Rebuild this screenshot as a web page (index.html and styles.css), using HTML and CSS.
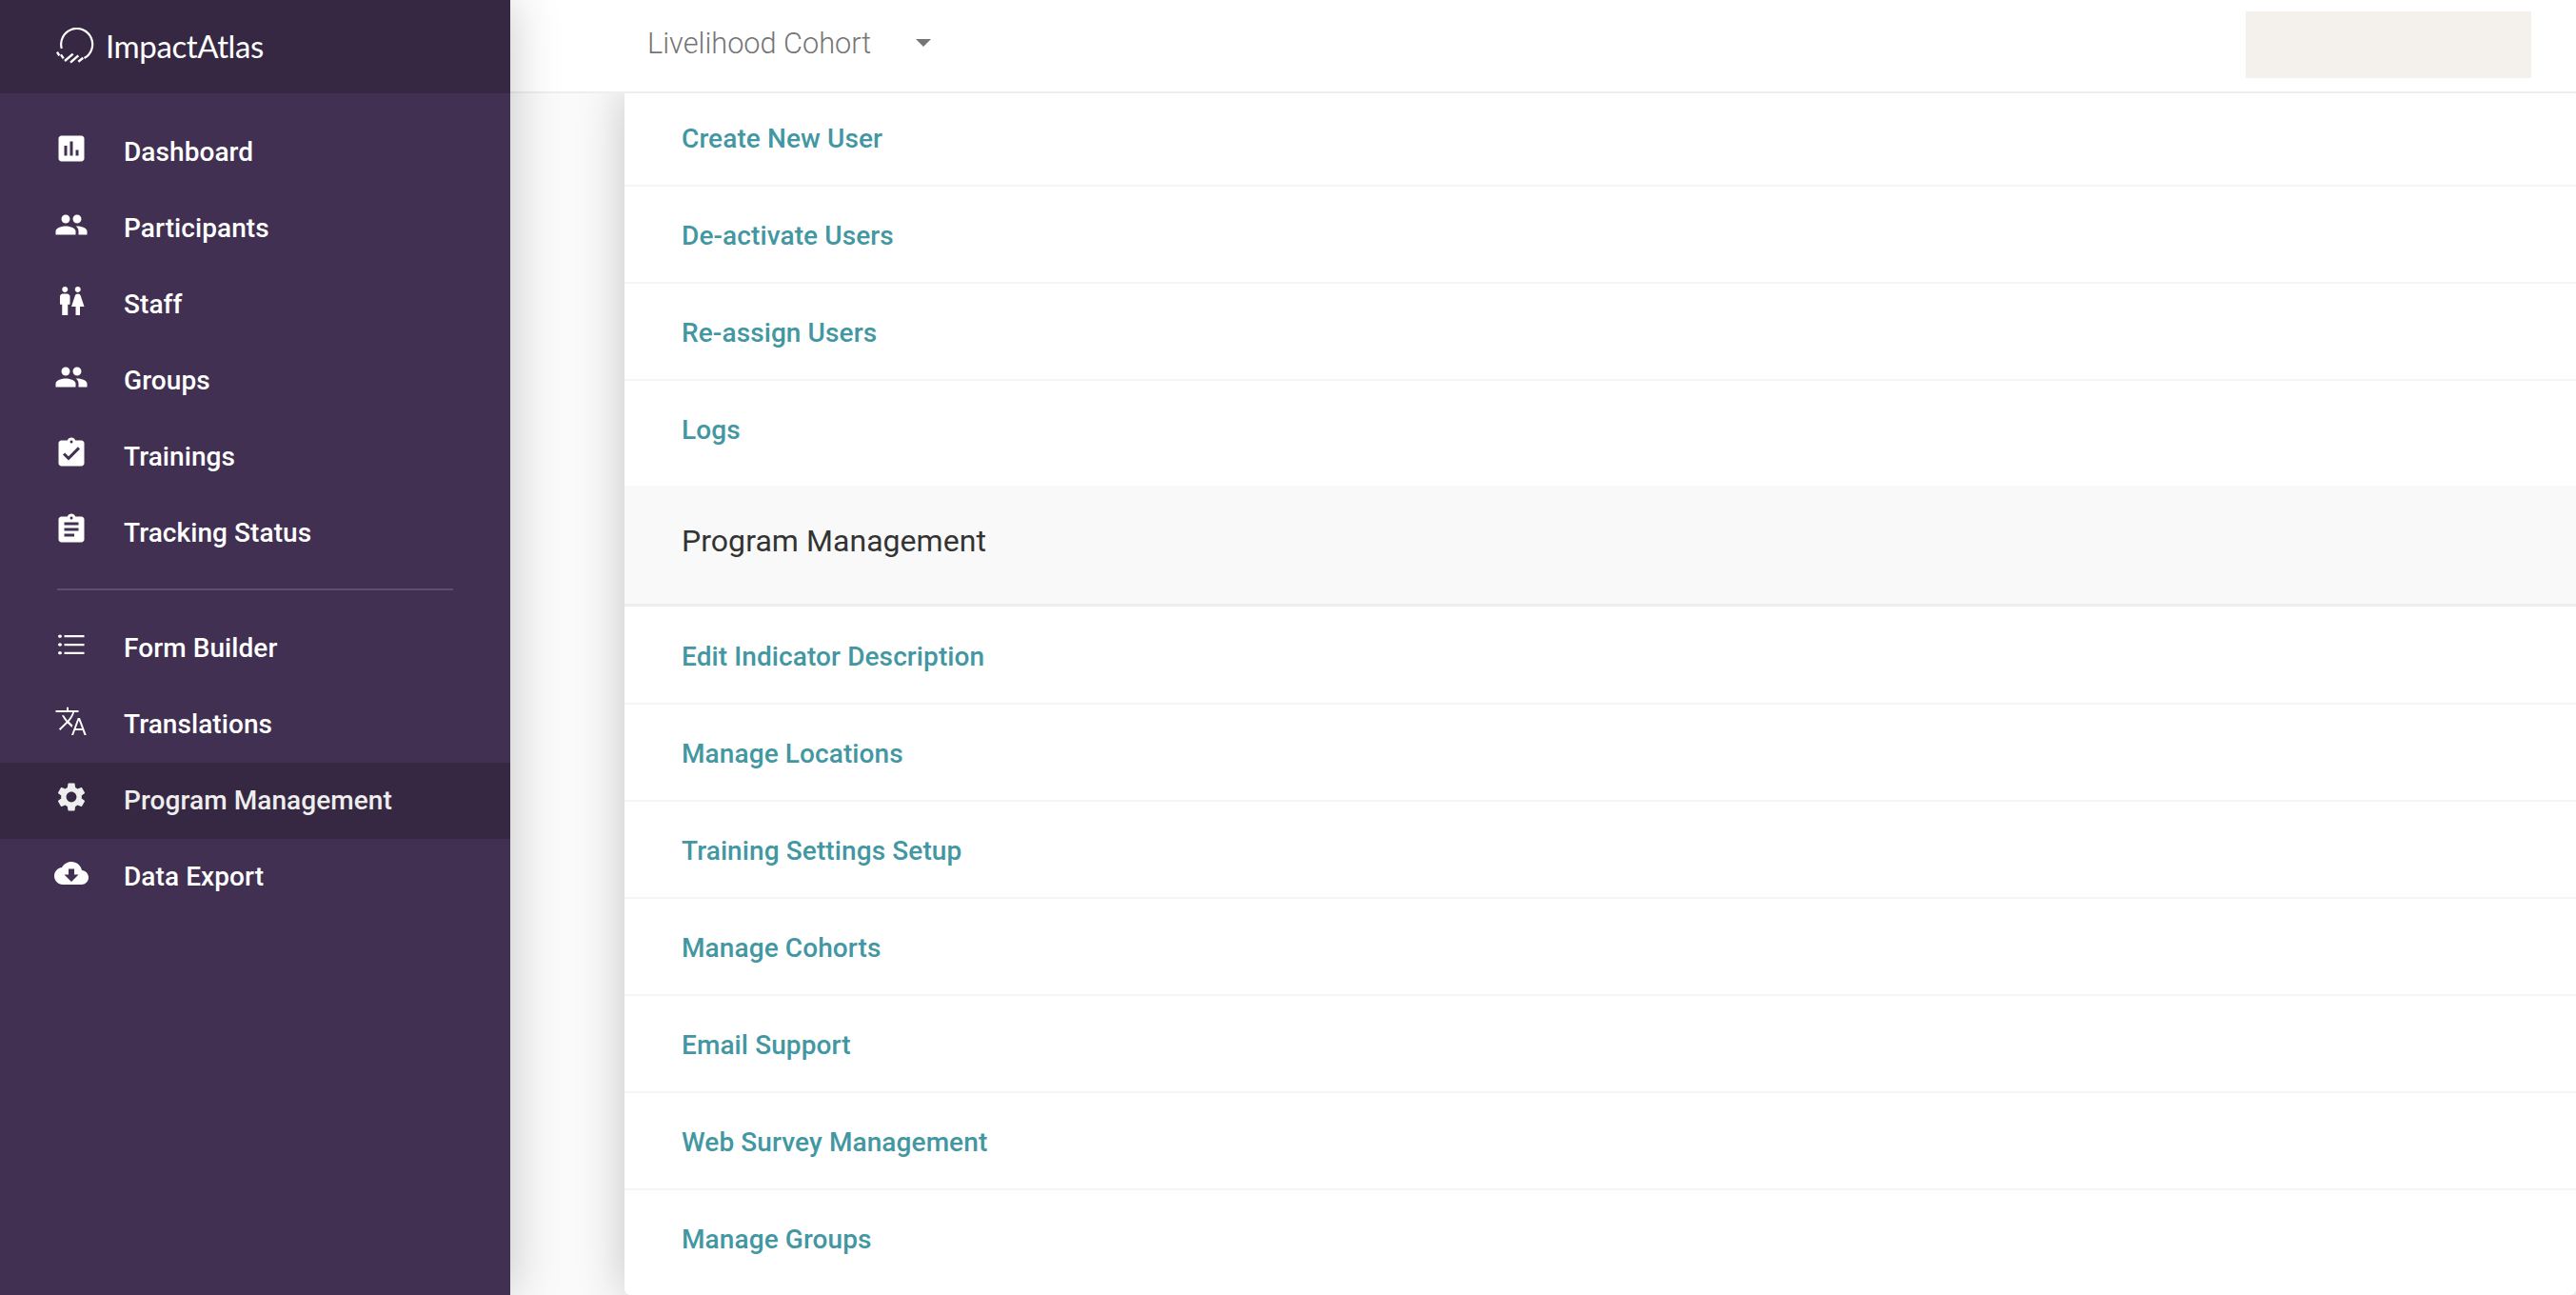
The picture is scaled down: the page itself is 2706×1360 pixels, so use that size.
FILE: index.html
```html
<!DOCTYPE html>
<html lang="en">
<head>
<meta charset="utf-8">
<title>ImpactAtlas</title>
<link rel="stylesheet" href="styles.css">
</head>
<body>
<div class="app">
  <aside class="sidebar">
    <div class="brand">
      <svg class="brand-mark" viewBox="0 0 40 40" fill="none" stroke="#fff" stroke-width="2.2">
        <path d="M5.800 22 A16.500 16.500 0 1 1 29.500 32"/>
        <path d="M1 25.700l2.300 3.600M5 28.300l2.700 4M9 35l8.700-7.300M15 36.700l8.300-7.400M23.300 35.700l5-4" stroke-width="2.400"/>
      </svg>
      <span class="brand-name">ImpactAtlas</span>
    </div>
    <nav class="nav">
      <a class="nav-item"><svg class="nav-icon" viewBox="0 0 24 24"><path d="M19 3H5c-1.1 0-2 .9-2 2v14c0 1.1.9 2 2 2h14c1.1 0 2-.9 2-2V5c0-1.1-.9-2-2-2zM9 17H7v-7h2v7zm4 0h-2V7h2v10zm4 0h-2v-4h2v4z"/></svg><span>Dashboard</span></a>
      <a class="nav-item"><svg class="nav-icon" viewBox="0 0 24 24"><path d="M16 11c1.66 0 2.99-1.34 2.99-3S17.66 5 16 5c-1.66 0-3 1.34-3 3s1.34 3 3 3zm-8 0c1.66 0 2.99-1.34 2.99-3S9.66 5 8 5C6.34 5 5 6.34 5 8s1.34 3 3 3zm0 2c-2.33 0-7 1.17-7 3.5V19h14v-2.5c0-2.33-4.67-3.5-7-3.5zm8 0c-.29 0-.62.02-.97.05 1.16.84 1.97 1.97 1.97 3.45V19h6v-2.5c0-2.33-4.67-3.5-7-3.5z"/></svg><span>Participants</span></a>
      <a class="nav-item"><svg class="nav-icon" viewBox="0 0 24 24"><path d="M5.5 22v-7.5H4V9c0-1.1.9-2 2-2h3c1.1 0 2 .9 2 2v5.5H9.5V22h-4zM18 22v-6h3l-2.54-7.63C18.18 7.55 17.42 7 16.56 7h-.12c-.86 0-1.63.55-1.9 1.37L12 16h3v6h3zM7.5 6c1.11 0 2-.89 2-2s-.89-2-2-2-2 .89-2 2 .89 2 2 2zm9 0c1.11 0 2-.89 2-2s-.89-2-2-2-2 .89-2 2 .89 2 2 2z"/></svg><span>Staff</span></a>
      <a class="nav-item"><svg class="nav-icon" viewBox="0 0 24 24"><path d="M16 11c1.66 0 2.99-1.34 2.99-3S17.66 5 16 5c-1.66 0-3 1.34-3 3s1.34 3 3 3zm-8 0c1.66 0 2.99-1.34 2.99-3S9.66 5 8 5C6.34 5 5 6.34 5 8s1.34 3 3 3zm0 2c-2.33 0-7 1.17-7 3.5V19h14v-2.5c0-2.33-4.67-3.5-7-3.5zm8 0c-.29 0-.62.02-.97.05 1.16.84 1.97 1.97 1.97 3.45V19h6v-2.5c0-2.33-4.67-3.5-7-3.5z"/></svg><span>Groups</span></a>
      <a class="nav-item"><svg class="nav-icon" viewBox="0 0 24 24"><path d="M19 3h-4.18C14.4 1.84 13.3 1 12 1c-1.3 0-2.4.84-2.82 2H5c-1.1 0-2 .9-2 2v14c0 1.1.9 2 2 2h14c1.1 0 2-.9 2-2V5c0-1.1-.9-2-2-2zm-7 0c.55 0 1 .45 1 1s-.45 1-1 1-1-.45-1-1 .45-1 1-1zm-2 14l-4-4 1.41-1.41L10 14.17l6.59-6.59L18 9l-8 8z"/></svg><span>Trainings</span></a>
      <a class="nav-item"><svg class="nav-icon" viewBox="0 0 24 24"><path d="M19 3h-4.18C14.4 1.84 13.3 1 12 1c-1.3 0-2.4.84-2.82 2H5c-1.1 0-2 .9-2 2v14c0 1.1.9 2 2 2h14c1.1 0 2-.9 2-2V5c0-1.1-.9-2-2-2zm-7 0c.55 0 1 .45 1 1s-.45 1-1 1-1-.45-1-1 .45-1 1-1zm2 14H7v-2h7v2zm3-4H7v-2h10v2zm0-4H7V7h10v2z"/></svg><span>Tracking Status</span></a>
      <hr class="nav-divider">
      <a class="nav-item"><svg class="nav-icon" viewBox="0 0 24 24"><path d="M4 10.900c-.7 0-1.300.5-1.300 1.100s.6 1.100 1.300 1.100 1.300-.5 1.300-1.100-.6-1.100-1.300-1.100zM4 5c-.7 0-1.300.5-1.300 1.100S3.300 7.200 4 7.200s1.300-.5 1.300-1.100S4.700 5 4 5zm0 11.700c-.7 0-1.300.5-1.300 1.100s.6 1.100 1.300 1.100 1.300-.5 1.300-1.100-.6-1.100-1.300-1.100zM7 18.700h14v-1.500H7zm0-5.900h14v-1.500H7zM7 5.300v1.500h14V5.300z"/></svg><span>Form Builder</span></a>
      <a class="nav-item"><svg class="nav-icon" viewBox="0 0 24 24"><path d="M12.870 15.070l-2.540-2.510.03-.03c1.740-1.940 2.980-4.170 3.710-6.530H17V4.700h-7V2.500H8.700v2.200H1v1.290h11.900C12.200 8.100 10.800 10.100 9.300 11.800 8.300 10.700 7.400 9.400 6.700 8.200H5.300c.8 1.600 1.900 3.200 3.100 4.500l-5.100 5 .9.900 5.100-5 3 3zM18 10h-1.500L12 22h1.400l1.200-3.300h5.200L21 22h1.500L18 10zm-2.900 7.400l2.100-5.800 2.200 5.800h-4.300z"/></svg><span>Translations</span></a>
      <a class="nav-item is-active"><svg class="nav-icon" viewBox="0 0 24 24"><path d="M19.14,12.94c0.04-0.3,0.06-0.61,0.06-0.94c0-0.32-0.02-0.64-0.07-0.94l2.03-1.58c0.18-0.14,0.23-0.41,0.12-0.61 l-1.92-3.32c-0.12-0.22-0.37-0.29-0.59-0.22l-2.39,0.96c-0.5-0.38-1.03-0.7-1.62-0.94L14.4,2.81c-0.04-0.24-0.24-0.41-0.48-0.41 h-3.84c-0.24,0-0.43,0.17-0.47,0.41L9.25,5.35C8.66,5.59,8.12,5.92,7.63,6.29L5.24,5.33c-0.22-0.08-0.47,0-0.59,0.22L2.74,8.87 C2.62,9.08,2.66,9.34,2.86,9.48l2.03,1.58C4.84,11.36,4.8,11.69,4.8,12s0.02,0.64,0.07,0.94l-2.03,1.58 c-0.18,0.14-0.23,0.41-0.12,0.61l1.92,3.32c0.12,0.22,0.37,0.29,0.59,0.22l2.39-0.96c0.5,0.38,1.03,0.7,1.62,0.94l0.36,2.54 c0.05,0.24,0.24,0.41,0.48,0.41h3.84c0.24,0,0.44-0.17,0.47-0.41l0.36-2.54c0.59-0.24,1.13-0.56,1.62-0.94l2.39,0.96 c0.22,0.08,0.47,0,0.59-0.22l1.92-3.32c0.12-0.22,0.07-0.47-0.12-0.61L19.14,12.94z M12,15.6c-1.98,0-3.6-1.62-3.6-3.6 s1.62-3.6,3.6-3.6s3.6,1.62,3.6,3.6S13.98,15.6,12,15.6z"/></svg><span>Program Management</span></a>
      <a class="nav-item"><svg class="nav-icon" viewBox="0 0 24 24"><path d="M19.35 10.04C18.67 6.59 15.64 4 12 4 9.11 4 6.6 5.64 5.35 8.04 2.34 8.36 0 10.91 0 14c0 3.31 2.69 6 6 6h13c2.76 0 5-2.24 5-5 0-2.64-2.05-4.78-4.65-4.96zM17 13l-5 5-5-5h3V9h4v4h3z"/></svg><span>Data Export</span></a>
    </nav>
  </aside>
  <div class="main">
    <header class="topbar">
      <div class="cohort">
        <span class="cohort-name">Livelihood Cohort</span>
        <span class="caret"></span>
      </div>
      <div class="account-box"></div>
    </header>
    <div class="content">
      <section class="panel">
        <ul class="link-list link-list-first">
          <li class="link-row"><a>Create New User</a></li>
          <li class="link-row"><a>De-activate Users</a></li>
          <li class="link-row"><a>Re-assign Users</a></li>
          <li class="link-row link-row-last"><a>Logs</a></li>
        </ul>
        <h2 class="section-head">Program Management</h2>
        <ul class="link-list link-list-second">
          <li class="link-row"><a>Edit Indicator Description</a></li>
          <li class="link-row"><a>Manage Locations</a></li>
          <li class="link-row"><a>Training Settings Setup</a></li>
          <li class="link-row"><a>Manage Cohorts</a></li>
          <li class="link-row"><a>Email Support</a></li>
          <li class="link-row"><a>Web Survey Management</a></li>
          <li class="link-row link-row-last"><a>Manage Groups</a></li>
        </ul>
      </section>
    </div>
  </div>
</div>
</body>
</html>
```
FILE: styles.css
```css
* { box-sizing: border-box; }
html, body { margin: 0; height: 100%; overflow: hidden; }
body { font-family: Roboto, "Liberation Sans", sans-serif; background: #fafafa; }
.app { display: flex; height: 1360px; }

.sidebar {
  width: 536px;
  flex: none;
  background: #413052;
  color: #fff;
  position: relative;
  z-index: 3;
  box-shadow: 0 0 50px rgba(0, 0, 0, .22);
}
.brand {
  height: 98px;
  background: #362842;
  display: flex;
  align-items: center;
  padding: 0 0 0 59px;
  gap: 12px;
}
.brand-mark { width: 40px; height: 40px; flex: none; }
.brand-name { font-family: Lato, sans-serif; font-size: 33px; font-weight: 400; color: #fff; letter-spacing: -.4px; margin-bottom: 2px; }

.nav { padding-top: 22px; }
.nav-item {
  display: flex;
  height: 80px;
  line-height: 80px;
  padding-left: 57px;
  font-size: 28px;
  font-weight: 500;
  letter-spacing: .08px;
  color: #fff;
}
.nav-icon { width: 36px; height: 36px; margin-top: 18px; margin-right: 37px; fill: currentColor; flex: none; }
.nav-item.is-active { background: #362842; color: #eee; }
.nav-divider { border: 0; height: 2px; background: #5f4e70; margin: 18px 0 21px 60px; width: 416px; }

.main { flex: 1; min-width: 0; display: flex; flex-direction: column; height: 1360px; overflow: hidden; }
.topbar {
  height: 98px;
  flex: none;
  background: #fff;
  border-bottom: 2px solid #eee;
  display: flex;
  align-items: center;
  justify-content: space-between;
  padding: 0 47px 2px 144px;
  position: relative;
  z-index: 2;
}
.cohort { display: flex; align-items: center; gap: 47px; margin-bottom: 4px; }
.cohort-name { font-size: 30.7px; font-weight: 300; color: #757575; }
.caret { width: 0; height: 0; border-left: 8px solid transparent; border-right: 8px solid transparent; border-top: 8px solid #757575; }
.account-box { width: 300px; height: 70px; background: #f4f0eb; }

.content { flex: 1; min-height: 0; padding-left: 120px; overflow: hidden; }
.panel {
  background: #fff;
  border-radius: 6px;
  box-shadow: 0 0 50px rgba(0, 0, 0, .22);
  min-height: calc(100% + 4px);
}

.link-list { list-style: none; margin: 0; padding: 0; }
.link-row {
  height: 102px;
  border-bottom: 2px solid #f5f5f5;
  display: flex;
  align-items: center;
  padding: 2px 0 0 60px;
  font-size: 28px;
  font-weight: 500;
  letter-spacing: .1px;
  color: #4297a2;
}
.link-list-first { margin-top: -4px; margin-bottom: 8px; }
.link-list-second { margin-top: 1px; }
.link-row-last { border-bottom: 0; padding-top: 0; }
.section-head {
  margin: 0;
  height: 127px;
  padding: 0 0 9px 60px;
  display: flex;
  align-items: center;
  background: #f9f9f9;
  border-bottom: 3px solid #eee;
  font-size: 32px;
  font-weight: 400;
  letter-spacing: .05px;
  color: #333;
}
```
